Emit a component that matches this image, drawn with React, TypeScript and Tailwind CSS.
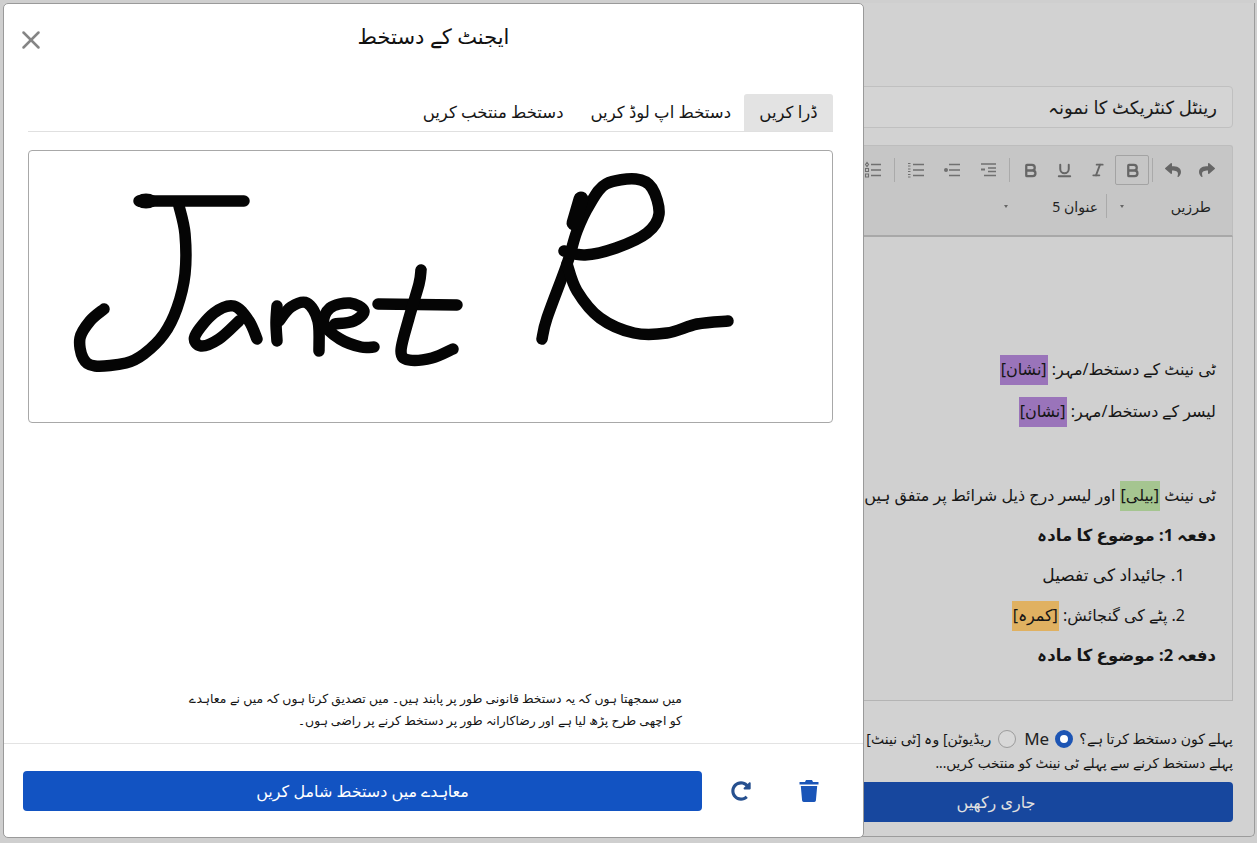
import { Bold, Italic, Underline, X } from 'lucide-react';
import { FaRedoAlt, FaReply, FaShare } from 'react-icons/fa';

type Pt = [number, number];

// smooth line through the sampled pen points
const stroke = (pts: Pt[]) => {
  let d = `M${pts[0][0]} ${pts[0][1]}`;
  for (let i = 0; i < pts.length - 1; i++) {
    const p0 = pts[i - 1] || pts[i];
    const p1 = pts[i];
    const p2 = pts[i + 1];
    const p3 = pts[i + 2] || p2;
    const c1x = p1[0] + (p2[0] - p0[0]) / 6;
    const c1y = p1[1] + (p2[1] - p0[1]) / 6;
    const c2x = p2[0] - (p3[0] - p1[0]) / 6;
    const c2y = p2[1] - (p3[1] - p1[1]) / 6;
    d += ` C${c1x} ${c1y} ${c2x} ${c2y} ${p2[0]} ${p2[1]}`;
  }
  return d;
};

const penStrokes: Pt[][] = [
  [[110, 50], [140, 50], [215, 50]],
  [[150, 55], [156, 83], [156, 123], [148, 157], [135, 183], [115, 203], [97, 212], [66, 215], [54, 207], [51, 187], [61, 170], [75, 158]],
  [[228, 188], [220, 170], [205, 155], [185, 162], [166, 185], [172, 195], [190, 188], [210, 170]],
  [[248, 155], [247, 172], [248, 190]],
  [[250, 170], [262, 156], [278, 152], [289, 170], [290, 200]],
  [[306, 173], [325, 170], [335, 160], [321, 152], [301, 157], [295, 173], [311, 188], [332, 196], [345, 196]],
  [[349, 153], [428, 154]],
  [[392, 119], [390, 133], [380, 167], [372, 200], [380, 209], [403, 207], [424, 198]],
  [[513, 188], [518, 167], [538, 113], [548, 80], [561, 53], [577, 33], [607, 28], [623, 37], [630, 63], [618, 82], [587, 97], [556, 104], [535, 100]],
  [[538, 113], [548, 140], [571, 167], [605, 182], [638, 182], [668, 173], [699, 170]],
  [[552, 48], [545, 72]],
];

const Signature = () => (
  <svg className="block h-full w-full" viewBox="0 0 803 271" fill="none">
    {penStrokes.map((pts, i) => (
      <path
        key={i}
        d={stroke(pts)}
        stroke="#050505"
        strokeWidth={i === 10 ? 15 : 11.5}
        strokeLinecap="round"
        strokeLinejoin="round"
      />
    ))}
    <ellipse cx="117" cy="50" rx="12" ry="7.500" fill="#050505" />
  </svg>
);

const Lines = ({ kind }: { kind: 'indent' | 'outdent' | 'ol' | 'check' }) => (
  <svg width="18" height="18" viewBox="0 0 18 18" fill="none" stroke="#707070" strokeWidth="1.5">
    {kind === 'indent' && (
      <>
        <path d="M2 3h15M9 7h8M9 10.500h8M5 14.500h12" />
        <path d="M2 8.500h4" strokeWidth="2" />
      </>
    )}
    {kind === 'outdent' && (
      <>
        <path d="M6 3.500h11M6 9h11M6 14.500h11" />
        <circle cx="3" cy="9" r="2" fill="#707070" stroke="none" />
      </>
    )}
    {kind === 'ol' && (
      <>
        <path d="M6 3.500h11M6 9h11M6 14.500h11" />
        <path d="M1 2.500h2.500M1 5h2.500M1 8h2.500M1 10.500h2.500M1 13.500h2.500M1 16h2.500" strokeWidth="1.200" />
      </>
    )}
    {kind === 'check' && (
      <>
        <path d="M7 3.500h10M7 9h10M7 14.500h10" />
        <path d="M1.500 3.500l1.500-2 1.500 2-1.500 2zM1.500 7.500h3v3h-3zM1.500 13h3v3h-3z" strokeWidth="1.100" />
      </>
    )}
  </svg>
);

const Tool = ({ children, active }: { children: React.ReactNode; active?: boolean }) => (
  <span
    className={`flex h-[30px] w-[34px] items-center justify-center rounded-[2px] text-[#666666] ${
      active ? 'border border-[#a3a3a3]' : ''
    }`}
  >
    {children}
  </span>
);

const ListTool = ({ kind }: { kind: 'indent' | 'outdent' | 'ol' | 'check' }) => (
  <span className="flex h-[30px] w-[36px] items-center justify-center">
    <Lines kind={kind} />
  </span>
);

const Sep = () => <span className="mx-[3px] h-[24px] w-px bg-[#aaaaaa]" />;

const Chip = ({ className, children }: { className: string; children: string }) => (
  <span className={`inline-block h-[30px] px-px leading-[28px] ${className}`}>{children}</span>
);

const Caret = () => (
  <span className="block h-0 w-0 border-x-[2.5px] border-t-[3px] border-x-transparent border-t-[#666666]" />
);

const Editor = () => (
  <div className="flex h-full justify-end bg-[#cfcfcf] pt-[3px] pr-[2px]">
    <div className="flex h-[834px] w-[1252px] flex-col items-start rounded-b-[5px] border-b border-r border-[#9c9c9c] bg-[#d2d2d2] pt-[83px] pr-[21px]" dir="rtl">
      <div className="flex h-[42px] w-[474px] items-center rounded-[4px] border border-[#c0c0c0] bg-[#d4d4d4] pr-[15px] text-[18px] text-[#1a1a1a]">
        رینٹل کنٹریکٹ کا نمونہ
      </div>

      <div className="mt-[17px] h-[92px] w-[474px] rounded-t-[3px] border border-[#bdbdbd] border-b-[2px] border-b-[#a8a8a8] bg-[#c6c6c6]">
        <div className="flex items-center pt-[9px] pr-[8px]">
          <Tool><FaShare size={16} /></Tool>
          <Tool><FaReply size={16} /></Tool>
          <Sep />
          <Tool active><Bold size={17} strokeWidth={3.2} /></Tool>
          <Tool><Italic size={16} strokeWidth={2.800} /></Tool>
          <Tool><Underline size={17} strokeWidth={2.800} /></Tool>
          <Tool><Bold size={17} strokeWidth={3.2} /></Tool>
          <Sep />
          <ListTool kind="indent" />
          <ListTool kind="outdent" />
          <ListTool kind="ol" />
          <Sep />
          <ListTool kind="check" />
        </div>
        <div className="mt-[9px] flex h-[24px] items-center pr-[21px] text-[14px] text-[#222222]">
          <span className="w-[69px]">طرزیں</span>
          <span className="mr-[18px]"><Caret /></span>
          <span className="mr-[13px] h-[24px] w-px bg-[#aaaaaa]" />
          <span className="mr-[8px] w-[70px]">عنوان 5</span>
          <span className="mr-[20px]"><Caret /></span>
        </div>
      </div>

      <div className="h-[464px] w-[474px] border-x border-b border-[#b4b4b4] bg-[#d0d0d0] pt-[112px] pr-[16px] text-[16px] leading-[40px] text-[#161616]">
        <p>ٹی نینٹ کے دستخط/مہر: <Chip className="bg-[#9a74ba]">[نشان]</Chip></p>
        <p className="mt-[2px]">لیسر کے دستخط/مہر: <Chip className="bg-[#9a74ba]">[نشان]</Chip></p>
        <p className="mt-[44px] whitespace-nowrap">
          ٹی نینٹ <Chip className="bg-[#a5c590]">[بیلی]</Chip> اور لیسر درج ذیل شرائط پر متفق ہیں:
        </p>
        <p className="text-[16.500px] font-bold">دفعہ 1: موضوع کا مادہ</p>
        <p className="pr-[31px] text-[17px]">1. جائیداد کی تفصیل</p>
        <p className="pr-[31px]">2. پٹے کی گنجائش: <Chip className="bg-[#e0b161]">[کمرہ]</Chip></p>
        <p className="text-[16.500px] font-bold">دفعہ 2: موضوع کا مادہ</p>
      </div>

      <div className="mt-[25px] w-[474px] text-[14px] leading-[25px] text-[#161616]">
        <div className="flex items-center whitespace-nowrap">
          <span>پہلے کون دستخط کرتا ہے؟</span>
          <span className="mr-[6px] h-[18px] w-[18px] rounded-full border-[5px] border-[#1d55b4] bg-white" />
          <span className="mr-[6px] text-[17px] text-[#222222]" dir="ltr">Me</span>
          <span className="mr-[8px] h-[18px] w-[18px] rounded-full border border-[#9c9c9c] bg-[#d8d8d8]" />
          <span className="mr-[7px]">ریڈیوٹن] وہ [ٹی نینٹ]</span>
        </div>
        <p className="text-[13.500px]">پہلے دستخط کرنے سے پہلے ٹی نینٹ کو منتخب کریں...</p>
      </div>

      <button className="mt-[6px] h-[40px] w-[474px] rounded-[4px] bg-[#17479e] text-[16px] text-[#e0e0e0]">
        جاری رکھیں
      </button>
    </div>
  </div>
);

const SignatureModal = () => (
  <div className="absolute left-[3px] top-[3px] flex h-[835px] w-[861px] flex-col rounded-[5px] border border-[#9a9a9a] bg-white">
    <div className="relative flex h-[65px] shrink-0 items-center justify-center text-[21px] text-[#111111]" dir="rtl">
      ایجنٹ کے دستخط
      <X className="absolute left-[12px] top-[21px] text-[#858585]" size={30} strokeWidth={2} />
    </div>

    <div className="ml-[24px] mr-[30px] mt-[25px] flex h-[38px] shrink-0 items-stretch border-b border-[#e0e0e0] text-[16.500px] text-[#161616]" dir="rtl">
      <span className="flex w-[89px] items-center justify-center rounded-t-[3px] bg-[#e3e3e3]">ڈرا کریں</span>
      <span className="mr-[13px] flex items-center">دستخط اپ لوڈ کریں</span>
      <span className="mr-[27px] flex items-center">دستخط منتخب کریں</span>
    </div>

    <div className="ml-[24px] mr-[30px] mt-[18px] h-[273px] shrink-0 rounded-[4px] border border-[#a8a8a8]">
      <Signature />
    </div>

    <div className="mt-auto pr-[181px] pb-[11px] text-[12.400px] leading-[22px] text-[#151515]" dir="rtl">
      <p className="whitespace-nowrap">میں سمجھتا ہوں کہ یہ دستخط قانونی طور پر پابند ہیں۔ میں تصدیق کرتا ہوں کہ میں نے معاہدے</p>
      <p className="whitespace-nowrap">کو اچھی طرح پڑھ لیا ہے اور رضاکارانہ طور پر دستخط کرنے پر راضی ہوں۔</p>
    </div>

    <div className="flex h-[94px] shrink-0 items-start gap-[22px] border-t border-[#e3e3e3] pt-[27px] pl-[19px]">
      <button className="h-[40px] w-[679px] rounded-[4px] bg-[#1253c2] text-[16px] text-white" dir="rtl">
        معاہدے میں دستخط شامل کریں
      </button>
      <span className="ml-[5px] flex h-[40px] w-[24px] items-center justify-center text-[#26508f]">
        <FaRedoAlt size={20} />
      </span>
      <span className="ml-[22px] flex h-[40px] w-[24px] items-center justify-center">
        <svg width="20" height="22" viewBox="0 0 20 22" fill="#1a55b8">
          <path d="M7 0h6l1 2h5.500v2.500H.5V2H6z" />
          <path d="M1.800 6h16.400l-1.300 14.500a1.600 1.600 0 0 1-1.600 1.500H4.700a1.600 1.600 0 0 1-1.600-1.500z" />
        </svg>
      </span>
    </div>
  </div>
);

export default function App() {
  return (
    <div className="relative h-[843px] w-[1257px] overflow-hidden font-['Noto_Sans','DejaVu_Sans',sans-serif]">
      <Editor />
      <SignatureModal />
    </div>
  );
}
